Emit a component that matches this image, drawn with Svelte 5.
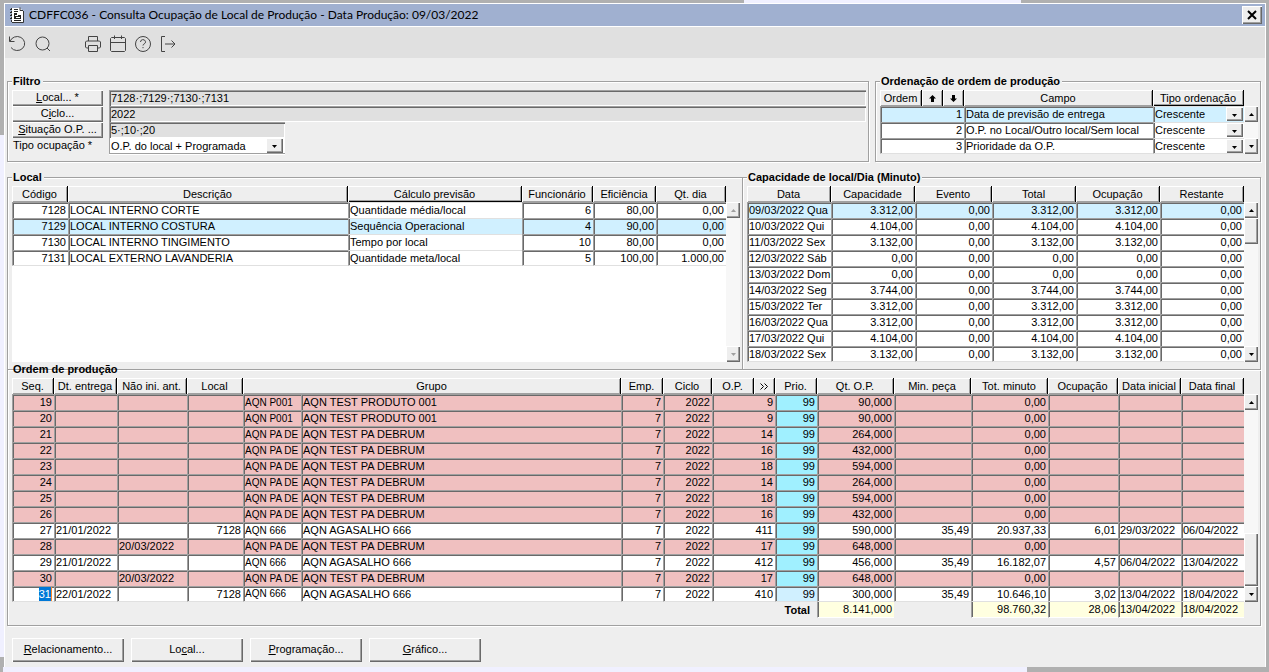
<script lang="ts">
    type Place = [code: string, name: string, forecast: string, staff: string, efficiency: string, perDay: string];

    const places: Place[] = [
        ['7128', 'LOCAL INTERNO CORTE', 'Quantidade média/local', '6', '80,00', '0,00'],
        ['7129', 'LOCAL INTERNO COSTURA', 'Sequência Operacional', '4', '90,00', '0,00'],
        ['7130', 'LOCAL INTERNO TINGIMENTO', 'Tempo por local', '10', '80,00', '0,00'],
        ['7131', 'LOCAL EXTERNO LAVANDERIA', 'Quantidade meta/local', '5', '100,00', '1.000,00'],
    ];

    // There are no events in the period, so total and occupation equal the capacity.
    const days = [
        ['09/03/2022 Qua', '3.312,00'],
        ['10/03/2022 Qui', '4.104,00'],
        ['11/03/2022 Sex', '3.132,00'],
        ['12/03/2022 Sáb', '0,00'],
        ['13/03/2022 Dom', '0,00'],
        ['14/03/2022 Seg', '3.744,00'],
        ['15/03/2022 Ter', '3.312,00'],
        ['16/03/2022 Qua', '3.312,00'],
        ['17/03/2022 Qui', '4.104,00'],
        ['18/03/2022 Sex', '3.132,00'],
    ];

    const sorting = ['Data de previsão de entrega', 'O.P. no Local/Outro local/Sem local', 'Prioridade da O.P.'];

    type Order = {
        seq: number;
        group: string;
        op: string;
        qty: string;
        due?: string;
        notBefore?: string;
        place?: string;
        perPiece?: string;
        minutes?: string;
        occupation?: string;
        start?: string;
        end?: string;
    };

    const PRODUTO = 'AQN TEST PRODUTO 001';
    const DEBRUM = 'AQN TEST PA DEBRUM';
    const AGASALHO = 'AQN AGASALHO 666';

    const groupCode: Record<string, string> = {
        [PRODUTO]: 'AQN P001',
        [DEBRUM]: 'AQN PA DE',
        [AGASALHO]: 'AQN 666',
    };

    const orders: Order[] = [
        { seq: 19, group: PRODUTO, op: '9', qty: '90,000' },
        { seq: 20, group: PRODUTO, op: '9', qty: '90,000' },
        { seq: 21, group: DEBRUM, op: '14', qty: '264,000' },
        { seq: 22, group: DEBRUM, op: '16', qty: '432,000' },
        { seq: 23, group: DEBRUM, op: '18', qty: '594,000' },
        { seq: 24, group: DEBRUM, op: '14', qty: '264,000' },
        { seq: 25, group: DEBRUM, op: '18', qty: '594,000' },
        { seq: 26, group: DEBRUM, op: '16', qty: '432,000' },
        { seq: 27, group: AGASALHO, op: '411', qty: '590,000', due: '21/01/2022', place: '7128', perPiece: '35,49', minutes: '20.937,33', occupation: '6,01', start: '29/03/2022', end: '06/04/2022' },
        { seq: 28, group: DEBRUM, op: '17', qty: '648,000', notBefore: '20/03/2022' },
        { seq: 29, group: AGASALHO, op: '412', qty: '456,000', due: '21/01/2022', perPiece: '35,49', minutes: '16.182,07', occupation: '4,57', start: '06/04/2022', end: '13/04/2022' },
        { seq: 30, group: DEBRUM, op: '17', qty: '648,000', notBefore: '20/03/2022' },
        { seq: 31, group: AGASALHO, op: '410', qty: '300,000', due: '22/01/2022', place: '7128', perPiece: '35,49', minutes: '10.646,10', occupation: '3,02', start: '13/04/2022', end: '18/04/2022' },
    ];

    // Column widths, 0 takes what is left.
    const sortCols = [42, 21, 21, 0, 91];
    const placeCols = [56, 0, 174, 71, 63, 70];
    const dayCols = [84, 84, 77, 84, 84, 0];
    const orderCols = [42, 63, 70, 56, 58, 0, 42, 49, 42, 21, 42, 77, 77, 77, 70, 63, 63];

    let currentPlace = $state('7129');
    let currentDay = $state('09/03/2022 Qua');
    let currentSort = $state(0);
    let currentOrder = $state(31);
</script>

{#snippet cols(widths: number[])}
    <colgroup>
        {#each widths as width}
            <col style:width={width ? `${width}px` : 'auto'} />
        {/each}
    </colgroup>
{/snippet}

{#snippet scrollbar(thumb: string, disabled: boolean)}
    <div class="scrollbar {thumb}">
        <button class="raised arrow" aria-label="Subir" {disabled}>
            <svg viewBox="0 0 5 3" width="5" height="3"><path d="M0 3L2.500 0L5 3z" /></svg>
        </button>
        <div class="track">
            {#if thumb !== 'none'}<div class="raised thumb"></div>{/if}
        </div>
        <button class="raised arrow" aria-label="Descer" {disabled}>
            <svg viewBox="0 0 5 3" width="5" height="3"><path d="M0 0L2.500 3L5 0z" /></svg>
        </button>
    </div>
{/snippet}

{#snippet dropArrow()}
    <span class="raised drop">
        <svg viewBox="0 0 5 3" width="5" height="3"><path d="M0 0L2.500 3L5 0z" /></svg>
    </span>
{/snippet}

<div class="desktop">
    <main class="window">
        <header class="titlebar">
            <svg class="doc" viewBox="0 0 14 16" width="14" height="16">
                <path d="M2 1h8l3 3v11H2z" fill="#fff" />
                <path d="M10 .5v3h3M13.500 4v11.500H2" fill="none" stroke="#333" />
                <path d="M1.500 1v14" stroke="#333" stroke-dasharray="2 1" />
                <path d="M4 2.500h4M4 4.500h4M4 13.500h7" stroke="#222" />
                <path d="M4 6h3v2h4v4H4z" fill="#222" />
                <path d="M5 8.500h3M6 10.500h4" stroke="#fff" />
                <path d="M0 2.500h2M0 5.500h2M0 8.500h2M0 11.500h2" stroke="#222" />
            </svg>
            <h1>CDFFC036 - Consulta Ocupação de Local de Produção - Data Produção: 09/03/2022</h1>
            <button class="raised close" aria-label="Fechar">
                <svg viewBox="0 0 10 10" width="10" height="10"><path d="M1 1l8 8M9 1L1 9" stroke="#000" stroke-width="2" /></svg>
            </button>
        </header>

        <nav class="toolbar">
            <button aria-label="Atualizar">
                <svg viewBox="0 0 18 18"><path d="M.5 1.500v5h5M1 6.500a7.500 7 0 1 1 1 6" /></svg>
            </button>
            <button aria-label="Pesquisar">
                <svg viewBox="0 0 18 18"><circle cx="8.500" cy="8.500" r="6.500" /><path d="M13 13l3 3" /></svg>
            </button>
            <button class="apart" aria-label="Imprimir">
                <svg viewBox="0 0 18 18">
                    <path d="M4.500 6V1.500h9V6M4.500 13H2.500L1.500 12V7l1-1h13l1 1v5l-1 1h-2M4.500 10.500h9v6h-9z" />
                </svg>
            </button>
            <button aria-label="Calendário">
                <svg viewBox="0 0 18 18"><path d="M2.500 2.500h13l1 1v12l-1 1h-13l-1-1v-12zM1.500 7.500h15M5.500 .5v3.500M12.500 .5v3.500" /></svg>
            </button>
            <button aria-label="Ajuda">
                <svg viewBox="0 0 18 18">
                    <circle cx="9" cy="9" r="7.500" />
                    <path d="M6.500 7a2.500 2.300 0 1 1 3.600 2c-.8.4-1.100.8-1.100 1.500M9 12v1.200" />
                </svg>
            </button>
            <button aria-label="Sair">
                <svg viewBox="0 0 18 18"><path d="M6 1.500H2.500v15H6M6 9h10M12.500 5.500L16 9l-3.500 3.500" /></svg>
            </button>
        </nav>

        <div class="content">
            <div class="top">
                <fieldset>
                    <legend>Filtro</legend>
                    <div class="filter">
                        <button class="raised" id="f-local"><u>L</u>ocal... *</button>
                        <input class="field" aria-labelledby="f-local" readonly value="7128·;7129·;7130·;7131" />
                        <button class="raised" id="f-ciclo">C<u>i</u>clo...</button>
                        <input class="field" aria-labelledby="f-ciclo" readonly value="2022" />
                        <button class="raised" id="f-situacao"><u>S</u>ituação O.P. ...</button>
                        <input class="field short" aria-labelledby="f-situacao" readonly value="5·;10·;20" />
                        <label for="f-tipo">Tipo ocupação *</label>
                        <div class="combo short sunken">
                            <select id="f-tipo"><option>O.P. do local + Programada</option></select>
                            {@render dropArrow()}
                        </div>
                    </div>
                </fieldset>

                <fieldset>
                    <legend>Ordenação de ordem de produção</legend>
                    <div class="grid">
                        <table>
                            {@render cols(sortCols)}
                            <thead>
                                <tr>
                                    <th>Ordem</th>
                                    <th aria-label="Subir ordem">
                                        <svg viewBox="0 0 7 7" width="7" height="7"><path d="M3.500 0L7 3.500H5V7H2V3.500H0z" /></svg>
                                    </th>
                                    <th aria-label="Descer ordem">
                                        <svg viewBox="0 0 7 7" width="7" height="7"><path d="M3.500 7L7 3.500H5V0H2v3.500H0z" /></svg>
                                    </th>
                                    <th>Campo</th>
                                    <th class="strong">Tipo ordenação</th>
                                </tr>
                            </thead>
                            <tbody>
                                {#each sorting as field, i}
                                    <tr class:current={i === currentSort} onclick={() => (currentSort = i)}>
                                        <td class="num" colspan="3">{i + 1}</td>
                                        <td>{field}</td>
                                        <td class="flat">
                                            <div class="combo">
                                                <select aria-label="Tipo ordenação de {field}">
                                                    <option>Crescente</option>
                                                    <option>Decrescente</option>
                                                </select>
                                                {@render dropArrow()}
                                            </div>
                                        </td>
                                    </tr>
                                {/each}
                            </tbody>
                        </table>
                        {@render scrollbar('none', false)}
                    </div>
                </fieldset>
            </div>

            <div class="middle">
                <fieldset>
                    <legend>Local</legend>
                    <div class="grid filled">
                        <table>
                            {@render cols(placeCols)}
                            <thead>
                                <tr>
                                    <th>Código</th>
                                    <th>Descrição</th>
                                    <th class="strong">Cálculo previsão</th>
                                    <th>Funcionário</th>
                                    <th>Eficiência</th>
                                    <th>Qt. dia</th>
                                </tr>
                            </thead>
                            <tbody>
                                {#each places as [code, name, forecast, staff, efficiency, perDay]}
                                    <tr class:current={code === currentPlace} onclick={() => (currentPlace = code)}>
                                        <td class="num">{code}</td>
                                        <td>{name}</td>
                                        <td class="flat">{forecast}</td>
                                        <td class="num">{staff}</td>
                                        <td class="num">{efficiency}</td>
                                        <td class="num">{perDay}</td>
                                    </tr>
                                {/each}
                            </tbody>
                        </table>
                        {@render scrollbar('none', true)}
                    </div>
                </fieldset>

                <fieldset class="joined">
                    <legend>Capacidade de local/Dia (Minuto)</legend>
                    <div class="grid">
                        <table>
                            {@render cols(dayCols)}
                            <thead>
                                <tr>
                                    <th>Data</th>
                                    <th>Capacidade</th>
                                    <th>Evento</th>
                                    <th>Total</th>
                                    <th>Ocupação</th>
                                    <th>Restante</th>
                                </tr>
                            </thead>
                            <tbody>
                                {#each days as [day, capacity]}
                                    <tr class:current={day === currentDay} onclick={() => (currentDay = day)}>
                                        <td>{day}</td>
                                        <td class="num">{capacity}</td>
                                        <td class="num">0,00</td>
                                        <td class="num">{capacity}</td>
                                        <td class="num">{capacity}</td>
                                        <td class="num">0,00</td>
                                    </tr>
                                {/each}
                            </tbody>
                        </table>
                        {@render scrollbar('start', false)}
                    </div>
                </fieldset>
            </div>

            <fieldset class="orders">
                <legend>Ordem de produção</legend>
                <div class="grid">
                    <table>
                        {@render cols(orderCols)}
                        <thead>
                            <tr>
                                <th>Seq.</th>
                                <th>Dt. entrega</th>
                                <th>Não ini. ant.</th>
                                <th>Local</th>
                                <th colspan="2">Grupo</th>
                                <th>Emp.</th>
                                <th>Ciclo</th>
                                <th>O.P.</th>
                                <th aria-label="Detalhes da O.P.">
                                    <svg viewBox="0 0 8 7" width="8" height="7">
                                        <path d="M.5 .5l3 3l-3 3M4.500 .5l3 3l-3 3" fill="none" stroke="#000" />
                                    </svg>
                                </th>
                                <th>Prio.</th>
                                <th>Qt. O.P.</th>
                                <th>Min. peça</th>
                                <th>Tot. minuto</th>
                                <th>Ocupação</th>
                                <th>Data inicial</th>
                                <th>Data final</th>
                            </tr>
                        </thead>
                        <tbody>
                            {#each orders as order}
                                <tr class:late={!order.start} onclick={() => (currentOrder = order.seq)}>
                                    <td class="num">
                                        {#if order.seq === currentOrder}<mark>{order.seq}</mark>{:else}{order.seq}{/if}
                                    </td>
                                    <td>{order.due ?? ''}</td>
                                    <td>{order.notBefore ?? ''}</td>
                                    <td class="num">{order.place ?? ''}</td>
                                    <td class="code">{groupCode[order.group]}</td>
                                    <td>{order.group}</td>
                                    <td class="num">7</td>
                                    <td class="num">2022</td>
                                    <td class="num" colspan="2">{order.op}</td>
                                    <td class="num prio" class:selected={order.seq === currentOrder}>99</td>
                                    <td class="num">{order.qty}</td>
                                    <td class="num">{order.perPiece ?? ''}</td>
                                    <td class="num">{order.minutes ?? '0,00'}</td>
                                    <td class="num">{order.occupation ?? ''}</td>
                                    <td>{order.start ?? ''}</td>
                                    <td>{order.end ?? ''}</td>
                                </tr>
                            {/each}
                        </tbody>
                        <tfoot>
                            <tr>
                                <th colspan="11" scope="row">Total</th>
                                <td class="num">8.141,000</td>
                                <td class="blank"></td>
                                <td class="num">98.760,32</td>
                                <td class="num">28,06</td>
                                <td>13/04/2022</td>
                                <td>18/04/2022</td>
                            </tr>
                        </tfoot>
                    </table>
                    {@render scrollbar('end', false)}
                </div>
            </fieldset>

            <div class="actions">
                <button class="raised"><u>R</u>elacionamento...</button>
                <button class="raised">Lo<u>c</u>al...</button>
                <button class="raised"><u>P</u>rogramação...</button>
                <button class="raised"><u>G</u>ráfico...</button>
            </div>
        </div>
    </main>
</div>

<style>
    :global(body) {
        background: #b0b0b0;
    }

    /* Parts of the window behind show along the edges. */
    .desktop {
        padding: 3px 3px 5px 4px;
        background:
            linear-gradient(#f0f0ff, #f0f0ff) 744px 0 / 277px 3px no-repeat,
            linear-gradient(#f0f0ff, #f0f0ff) 0 135px / 4px 522px no-repeat,
            linear-gradient(#f0f0ff, #f0f0ff) 3px 100% / 1024px 5px no-repeat,
            #b0b0b0;
        font-family: 'Liberation Sans', Arial, sans-serif;
        font-size: 11px;
        line-height: 14px;
        color: #000;
    }

    .window {
        border: solid #fff;
        border-width: 1px 1px 0;
        background: #eee;
    }

    button,
    input,
    select {
        font: inherit;
        color: inherit;
        box-sizing: border-box;
        margin: 0;
        padding: 0;
        border: 0;
        border-radius: 0;
        background: none;
        min-width: 0;
    }

    .raised {
        background: #eee;
        box-shadow:
            inset 1px 1px #fff,
            inset -1px -1px #696969,
            inset -2px -2px #a0a0a0;
    }

    .titlebar {
        display: flex;
        align-items: center;
        gap: 5px;
        height: 22px;
        padding: 0 3px 0 5px;
        background: #a0b0d0;
        border-bottom: 1px solid #fff;
    }

    h1 {
        flex: 1;
        margin: 0;
        font-family: Lato, 'Segoe UI', sans-serif;
        font-size: 12px;
        font-weight: 400;
        line-height: 22px;
    }

    .close {
        display: grid;
        place-items: center;
        width: 20px;
        height: 18px;
    }

    .toolbar {
        display: flex;
        align-items: center;
        box-sizing: border-box;
        gap: 7px;
        height: 31px;
        padding: 2px 4px 0;
        background: #e0e0e0;
    }

    .toolbar button {
        width: 18px;
        height: 18px;
    }

    .toolbar .apart {
        margin-left: 25px;
    }

    .toolbar svg {
        display: block;
        width: 18px;
        height: 18px;
        fill: none;
        stroke: #444;
        stroke-linejoin: round;
    }

    .content {
        padding: 16px 4px 5px 2px;
    }

    .top {
        display: grid;
        grid-template-columns: 862fr 386fr;
        gap: 6px;
        margin-bottom: 8px;
    }

    .middle {
        display: grid;
        grid-template-columns: 736fr 518fr;
    }

    fieldset {
        display: flex;
        min-width: 0;
        margin: 0;
        padding: 2px 2px 7px 4px;
        border: 1px solid #a0a0a0;
        box-shadow:
            1px 1px #fff,
            inset 1px 1px #fff;
    }

    fieldset.joined {
        margin-left: -1px;
    }

    fieldset.orders {
        margin-top: -8px;
    }

    legend {
        padding: 0 2px 0 1px;
        background: #eee;
        font-weight: 700;
        line-height: 14px;
    }

    .filter {
        flex: 1;
        display: grid;
        grid-template-columns: 91px 1fr;
        grid-auto-rows: 16px;
        column-gap: 6px;
    }

    .filter .raised,
    .actions .raised {
        padding-bottom: 2px;
    }

    .filter label {
        padding-left: 1px;
        line-height: 15px;
    }

    .field {
        width: 100%;
        padding: 0 2px;
        background: #e0e0e0;
        box-shadow:
            inset 1px 1px #a0a0a0,
            inset 2px 2px #696969,
            inset -1px -1px #fff;
    }

    .short {
        width: 176px;
    }

    .combo {
        display: flex;
        box-sizing: border-box;
        background: #fff;
    }

    .combo select {
        flex: 1;
        appearance: none;
        padding: 0 1px;
        outline: none;
    }

    .sunken {
        padding-right: 2px;
        border: solid #a0a0a0;
        border-width: 0 0 1px 1px;
        box-shadow: 0 1px #fff;
    }

    .combo .drop {
        flex: none;
        display: grid;
        place-items: center;
        box-sizing: border-box;
        width: 17px;
        height: 15px;
        padding: 2px 1px 0 0;
        pointer-events: none;
    }

    .grid {
        flex: 1;
        min-width: 0;
        display: flex;
    }

    .filled {
        background: linear-gradient(#eee 16px, #fff 0);
    }

    table {
        flex: 1;
        width: 100%;
        min-width: 0;
        align-self: flex-start;
        table-layout: fixed;
        border-collapse: separate;
        border-spacing: 0;
    }

    th,
    td {
        box-sizing: border-box;
        height: 16px;
        padding: 0;
        overflow: hidden;
        white-space: nowrap;
        line-height: 15px;
        text-align: left;
    }

    thead th {
        border-right: 1px solid #000;
        box-shadow:
            inset 1px 1px #fff,
            inset -1px -1px #a0a0a0;
        font-weight: 400;
        text-align: center;
    }

    thead svg {
        vertical-align: middle;
    }

    thead .strong {
        box-shadow:
            inset 1px 1px #fff,
            inset 0 -1px #000,
            inset -1px -2px #a0a0a0;
    }

    td {
        padding: 0 1px;
        border: solid #a0a0a0;
        border-width: 1px 0 0 1px;
        background: #fff;
        box-shadow: inset 1px 1px #696969;
    }

    td.num {
        padding: 0 2px;
        text-align: right;
    }

    td.code {
        padding-right: 0;
        font-size: 10px;
    }

    tbody tr:last-child td {
        border-bottom: 1px solid #e0e0e0;
        line-height: 14px;
    }

    td.flat {
        border-top-color: #e0e0e0;
        box-shadow: inset 1px 0 #696969;
    }

    td .combo {
        background: none;
    }

    td .combo select {
        padding: 0;
    }

    td .combo .drop {
        height: 14px;
    }

    .current td {
        background: #d0f0ff;
    }

    .late td {
        background: #f0c0c0;
    }

    tbody tr .prio {
        background: #a0f0ff;
    }

    tbody tr .prio.selected {
        background: #d0f0ff;
    }

    mark {
        display: inline-block;
        background: #0078d7;
        border-right: 1px solid #ff8728;
        color: #fff;
    }

    tfoot th {
        padding-right: 7px;
        text-align: right;
    }

    tfoot td {
        border: solid #fff;
        border-width: 0 0 1px 1px;
        border-left-color: #a0a0a0;
        background: #ffffe0;
        box-shadow: inset 1px 0 #696969;
    }

    tfoot .blank {
        border: 0;
        background: none;
        box-shadow: none;
    }

    .scrollbar {
        flex: none;
        display: flex;
        flex-direction: column;
        width: 14px;
        margin-top: 16px;
    }

    .orders .scrollbar {
        margin-bottom: 16px;
    }

    .arrow {
        display: grid;
        place-items: center;
        height: 16px;
    }

    .arrow:disabled {
        fill: #a0a0a0;
    }

    .track {
        flex: 1;
        display: flex;
        flex-direction: column;
        background: #f7f7f7;
    }

    .thumb {
        height: 26px;
    }

    .end .track {
        justify-content: flex-end;
    }

    .end .thumb {
        height: 53px;
    }

    .actions {
        display: flex;
        gap: 7px;
        margin: 12px 0 0 5px;
    }

    .actions .raised {
        width: 112px;
        height: 24px;
    }
</style>
